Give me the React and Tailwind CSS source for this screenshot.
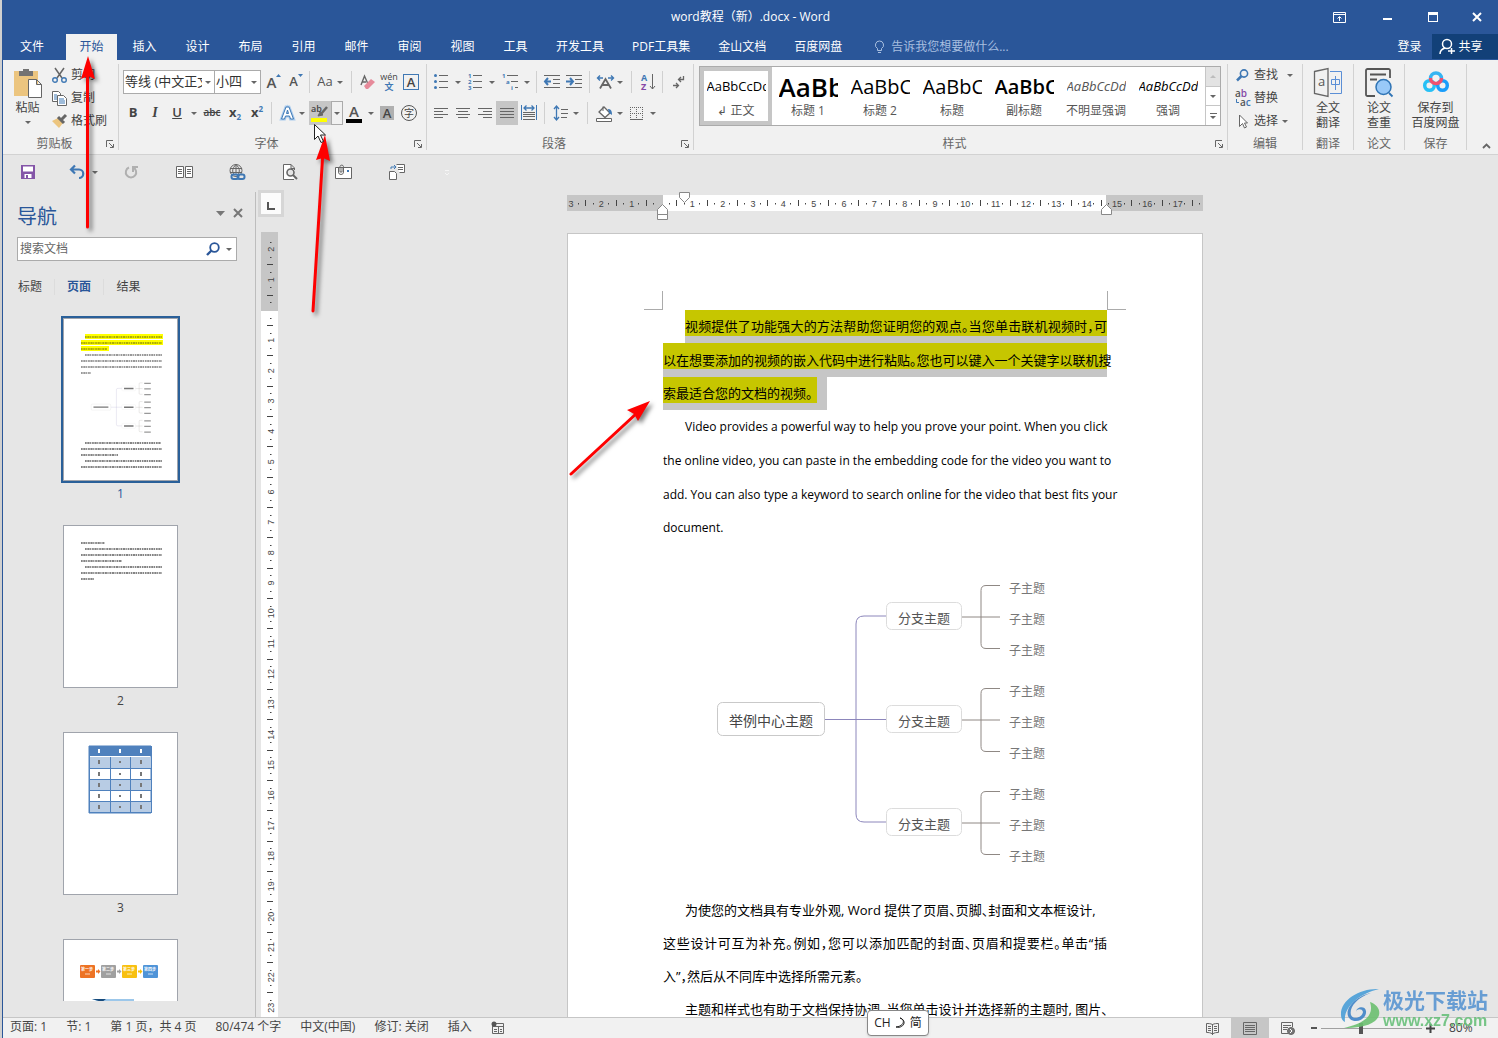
import React from 'react';
import clsx from 'clsx';

const G = '#666666';
const B = '#3f78b4';

const Svg = ({ w, h, children, className }) => (
  <svg width={w} height={h} viewBox={`0 0 ${w} ${h}`} fill="none" stroke={G} className={clsx('shrink-0 overflow-visible', className)} aria-hidden="true">
    {children}
  </svg>
);

const Caret = ({ className }) => (
  <span className={clsx('inline-block shrink-0 border-x-[3px] border-t-[3px] border-x-transparent border-t-[#666]', className)} />
);

const Tool = ({ label, className = 'w-[22px]', children }) => (
  <button type="button" aria-label={label} className={clsx('flex h-6 shrink-0 items-center justify-center', className)}>
    {children}
  </button>
);

const Drop = ({ label, className = 'w-3' }) => (
  <Tool label={`${label}选项`} className={className}>
    <Caret />
  </Tool>
);

const Sep = ({ className }) => <span className={clsx('h-[22px] w-px shrink-0 bg-[#d0d0d0]', className)} />;

const Launcher = () => (
  <button type="button" aria-label="更多设置" className="mr-1 shrink-0">
    <Svg w={8} h={8}>
      <path d="M.5 7V.5H7M3 3l4 4M7.500 4v3.500H4" />
    </Svg>
  </button>
);

const Group = ({ label, launcher, className, children }) => (
  <section className={clsx('flex shrink-0 flex-col border-r border-[#d2d2d2]', className)}>
    <div className="flex-1">{children}</div>
    <div className="flex h-3 items-center">
      <span className="flex-1 text-center leading-3 text-[#666]">{label}</span>
      {launcher && <Launcher />}
    </div>
  </section>
);

/* ---------- title bar and tabs ---------- */

const tabs = ['插入', '设计', '布局', '引用', '邮件', '审阅', '视图', '工具'];
const wideTabs = ['开发工具', 'PDF工具集', '金山文档', '百度网盘'];

const TitleBar = () => (
  <header className="bg-[#2a5699] text-white">
    <div className="flex h-[34px] items-center">
      <div className="w-[184px]" />
      <h1 className="flex-1 text-center text-xs">word教程（新）.docx - Word</h1>
      <div className="flex">
        <button type="button" aria-label="功能区显示选项" className="flex w-[50px] justify-center">
          <Svg w={13} h={11}>
            <path d="M.5.5h12v10H.5zM0 2.500h13" stroke="#fff" />
            <path d="M6.500 9V5M4.500 6.500l2-2 2 2" stroke="#fff" />
          </Svg>
        </button>
        <button type="button" aria-label="最小化" className="flex w-[46px] items-center justify-center">
          <span className="mt-1 h-[2px] w-[9px] bg-white" />
        </button>
        <button type="button" aria-label="最大化" className="flex w-[46px] items-center justify-center">
          <span className="h-[10px] w-[10px] border border-t-[3px] border-white" />
        </button>
        <button type="button" aria-label="关闭" className="flex w-[42px] items-center justify-center">
          <Svg w={10} h={10}>
            <path d="M1 1l8 8M9 1L1 9" stroke="#fff" strokeWidth="2" />
          </Svg>
        </button>
      </div>
    </div>
    <nav className="flex h-[26px] items-stretch pb-px text-xs">
      <button type="button" className="w-[58px]">文件</button>
      <button type="button" className="-mb-px mr-px ml-[5px] w-[51px] bg-[#f1f1f1] text-[#2a5699]">开始</button>
      {tabs.map((t) => (
        <button type="button" key={t} className="w-[53px]">{t}</button>
      ))}
      {wideTabs.map((t) => (
        <button type="button" key={t} className="px-[14px] whitespace-nowrap">{t}</button>
      ))}
      <label className="ml-[18px] flex flex-1 items-center gap-[6px] text-[#a8bfe0]">
        <Svg w={11} h={14}>
          <path d="M5.500 1a4 4 0 0 0-2 7.500V10.500h4V8.500a4 4 0 0 0-2-7.500zM4 12.500h3" stroke="#a8bfe0" />
        </Svg>
        <input type="text" placeholder="告诉我您想要做什么..." className="w-full outline-none placeholder:text-[#a8bfe0]" />
      </label>
      <button type="button" className="w-[45px]">登录</button>
      <button type="button" className="flex w-[66px] items-center justify-center gap-[3px] bg-[#124078] pr-2">
        <Svg w={16} h={17}>
          <circle cx="8" cy="6" r="4.500" stroke="#fff" strokeWidth="1.500" />
          <path d="M1 16c0-3 2-5 5-6M9 13h7M12.500 10v6" stroke="#fff" strokeWidth="1.500" />
        </Svg>
        共享
      </button>
    </nav>
  </header>
);

/* ---------- ribbon ---------- */

const Clipboard = () => (
  <Group label="剪贴板" launcher className="w-[116px]">
    <div className="flex">
      <button type="button" className="flex w-[49px] flex-col items-center pt-1">
        <Svg w={28} h={30}>
          <rect x="0" y="3" width="24" height="25" fill="#ecc57f" stroke="none" />
          <path d="M5 3h4V1h6v2h4v5H5z" fill="#737373" stroke="none" />
          <path d="M14.500 11.500h8l5 5v13h-13zM22.500 11.500v5h5" fill="#fff" />
        </Svg>
        <span className="leading-5">粘贴</span>
        <Caret className="mt-[3px]" />
      </button>
      <div className="flex flex-col gap-px">
        <button type="button" className="flex h-[22px] items-center gap-1">
          <Svg w={15} h={15}>
            <path d="M3 0l7 10M12 0L5 10" strokeWidth="1.500" />
            <circle cx="3" cy="12" r="2.300" stroke={B} strokeWidth="1.400" />
            <circle cx="12" cy="12" r="2.300" stroke={B} strokeWidth="1.400" />
          </Svg>
          剪切
        </button>
        <button type="button" className="flex h-[22px] items-center gap-1">
          <Svg w={15} h={15}>
            <path d="M.5.5h6l2 2v8h-8z" fill="#fff" />
            <path d="M2 4h3M2 6h3M2 8h3" stroke={B} />
            <path d="M5.500 4.500h6l3 3v7h-9z" fill="#fff" />
            <path d="M7 8h5M7 10h6M7 12h6" stroke={B} />
          </Svg>
          复制
        </button>
        <button type="button" className="flex h-[22px] items-center gap-1">
          <Svg w={15} h={14}>
            <path d="M0 7l6-3 5 5-4 5z" fill="#ecc57f" stroke="none" />
            <path d="M6 3l6 6M9 6l5-5" strokeWidth="3" />
          </Svg>
          格式刷
        </button>
      </div>
    </div>
  </Group>
);

const Combo = ({ label, value, className }) => (
  <label className={clsx('relative flex h-6 items-center border border-[#ababab] bg-white', className)}>
    <select aria-label={label} className="h-full w-full appearance-none overflow-hidden pr-3 pl-px text-[13px] whitespace-nowrap text-[#333] outline-none">
      <option>{value}</option>
    </select>
    <Caret className="absolute right-[3px]" />
  </label>
);

const FontGroup = () => (
  <Group label="字体" launcher className="w-[308px]">
    <div className="flex flex-col gap-[7px] pt-[6px] pl-[3px]">
      <div className="flex items-center">
        <Combo label="字体" value="等线 (中文正文)" className="ml-px w-[92px]" />
        <Combo label="字号" value="小四" className="-ml-px w-[47px]" />
        <Tool label="增大字号" className="ml-[2px] w-[22px]">
          <span className="text-[15px] font-semibold text-[#555]">A</span>
          <Svg w={5} h={4} className="-mt-3"><path d="M0 3l2.500-3L5 3z" fill={B} stroke="none" /></Svg>
        </Tool>
        <Tool label="减小字号" className="w-[22px]">
          <span className="text-[13px] font-semibold text-[#555]">A</span>
          <Svg w={5} h={4} className="-mt-3"><path d="M0 0l2.500 3L5 0z" fill={B} stroke="none" /></Svg>
        </Tool>
        <Sep className="ml-[2px]" />
        <Tool label="更改大小写" className="ml-1 w-[22px]"><span className="text-[13px] text-[#555]">Aa</span></Tool>
        <Drop label="更改大小写" className="w-[7px]" />
        <Sep className="ml-2" />
        <Tool label="清除格式" className="ml-1 w-[22px]">
          <Svg w={15} h={15}>
            <path d="M1 10L4.500 1 8 9M2 7h4" strokeWidth="1.400" />
            <path d="M4 11l7-7 4 3-7 7H6z" fill="#e68a9a" stroke="none" />
          </Svg>
        </Tool>
        <Tool label="拼音指南" className="w-[22px] flex-col">
          <span className="text-[9px] leading-[10px] text-[#444]">wén</span>
          <span className="text-[9px] leading-[10px] font-bold text-[#3f78b4]">文</span>
        </Tool>
        <Tool label="字符边框">
          <span className="h-4 w-4 border border-[#3f78b4] text-center text-[13px] leading-[14px] font-semibold text-[#444]">A</span>
        </Tool>
      </div>
      <div className="flex items-center text-[13px] text-[#444]">
        <Tool label="加粗"><b>B</b></Tool>
        <Tool label="倾斜"><i className="font-['Liberation_Serif'] text-sm font-bold">I</i></Tool>
        <Tool label="下划线"><span className="font-semibold underline">U</span></Tool>
        <Drop label="下划线" />
        <Tool label="删除线" className="w-6"><span className="text-[10px] font-semibold line-through">abc</span></Tool>
        <Tool label="下标" className="w-[22px]">
          <b>x</b><span className="mt-2 text-[8px] font-bold text-[#3f78b4]">2</span>
        </Tool>
        <Tool label="上标" className="w-[22px]">
          <b>x</b><span className="mb-2 text-[8px] font-bold text-[#3f78b4]">2</span>
        </Tool>
        <Sep className="ml-[3px]" />
        <Tool label="文本效果" className="ml-[5px] w-[20px]">
          <Svg w={15} h={16}>
            <path d="M1.500 14L6 2h3l4.500 12h-3l-1-3h-4l-1 3zM6 8.500h3L7.500 4z" stroke="#a9cbee" strokeWidth="3" />
            <path d="M1.500 14L6 2h3l4.500 12h-3l-1-3h-4l-1 3zM6.500 8.500h2L7.500 5z" fill="#fff" stroke={B} />
          </Svg>
        </Tool>
        <Drop label="文本效果" className="w-[9px]" />
        <Tool label="突出显示颜色" className="ml-[3px] w-[22px] bg-[#c6c6c6]">
          <Svg w={18} h={18}>
            <text x="0" y="8" fontSize="9" fontWeight="600" fill="#444" stroke="none">ab</text>
            <path d="M16 3l-6 7" strokeWidth="2.500" />
            <path d="M9 8l3 3-5 1z" fill={G} />
            <path d="M0 14h16v4H0z" fill="#ff0" stroke="none" />
          </Svg>
        </Tool>
        <Drop label="突出显示" className="w-3 border border-[#ababab]" />
        <Tool label="字体颜色" className="w-[22px] flex-col">
          <span className="text-[15px] leading-[15px] font-semibold text-[#555]">A</span>
          <span className="h-1 w-4 bg-black" />
        </Tool>
        <Drop label="字体颜色" className="w-[11px]" />
        <Tool label="字符底纹"><span className="h-[14px] w-[14px] bg-[#b0b0b0] text-center leading-[14px] font-semibold">A</span></Tool>
        <Tool label="带圈字符">
          <span className="h-4 w-4 rounded-full border border-[#555] text-center text-[10px] leading-[14px]">字</span>
        </Tool>
      </div>
    </div>
  </Group>
);

const Lines = ({ d }) => (
  <Svg w={14} h={13}><path d={d} /></Svg>
);

const ListIcon = ({ marks }) => (
  <Svg w={14} h={16}>
    {marks.map((m, i) =>
      m === '•' ? (
        <circle key={i} cx="1.500" cy={1.5 + i * 6} r="1.500" fill={B} stroke="none" />
      ) : (
        <text key={i} x="0" y={4 + i * 6} fontSize="6" fontWeight="700" fill={B} stroke="none">{m}</text>
      )
    )}
    <path d="M5 1.500h9M5 7.500h9M5 13.500h9" />
  </Svg>
);

const Paragraph = () => (
  <Group label="段落" launcher className="w-[267px]">
    <div className="flex flex-col gap-[7px] pt-[6px] pl-[3px]">
      <div className="flex items-center">
        <Tool label="项目符号"><ListIcon marks={['•', '•', '•']} /></Tool>
        <Drop label="项目符号" />
        <Tool label="编号"><ListIcon marks={['1', '2', '3']} /></Tool>
        <Drop label="编号" />
        <Tool label="多级列表" className="w-6">
          <Svg w={17} h={16}>
            <g fontSize="6" fontWeight="700" fill={B} stroke="none">
              <text x="0" y="4">1</text><text x="4" y="10">a</text><text x="9" y="16">i</text>
            </g>
            <path d="M5 1.500h11M9 7.500h7M13 13.500h3" />
          </Svg>
        </Tool>
        <Drop label="多级列表" className="w-[10px]" />
        <Sep className="ml-1" />
        <Tool label="减少缩进" className="ml-1 w-[22px]">
          <Svg w={16} h={14}>
            <path d="M0 .5h16M9 4.500h7M9 8.500h7M0 12.500h16" />
            <path d="M7 6.500H1M4 3L1 6.500 4 10" stroke={B} strokeWidth="2" />
          </Svg>
        </Tool>
        <Tool label="增加缩进">
          <Svg w={16} h={14}>
            <path d="M0 .5h16M9 4.500h7M9 8.500h7M0 12.500h16" />
            <path d="M0 6.500h6M4 3l3 3.500L4 10" stroke={B} strokeWidth="2" />
          </Svg>
        </Tool>
        <Sep className="ml-1" />
        <Tool label="中文版式" className="ml-1 w-[22px]">
          <Svg w={17} h={14}>
            <path d="M3 13.500L8.500 4 14 13.500M5.500 10h6" strokeWidth="1.800" />
            <path d="M6 3H1M3 .5L.5 3 3 5.500M11 3h5M14 .5L16.500 3 14 5.500" stroke={B} strokeWidth="1.400" />
          </Svg>
        </Tool>
        <Drop label="中文版式" className="w-2" />
        <Sep className="ml-[7px]" />
        <Tool label="排序" className="ml-1 w-[24px]">
          <Svg w={15} h={18}>
            <text x="0" y="8" fontSize="9" fontWeight="700" fill={B} stroke="none">A</text>
            <text x="0" y="17" fontSize="9" fontWeight="700" fill="#8548a5" stroke="none">Z</text>
            <path d="M11.500 1v15M9 13l2.500 3 2.500-3" />
          </Svg>
        </Tool>
        <Sep className="ml-[2px]" />
        <Tool label="显示编辑标记" className="ml-[5px] w-[22px]">
          <Svg w={12} h={13}>
            <path d="M10.500 0v3.500H6M8 1L5.500 3.500 8 6M0 9.500h5M3 7l2.500 2.500L3 12" strokeWidth="1.300" />
          </Svg>
        </Tool>
      </div>
      <div className="flex items-center">
        <Tool label="左对齐"><Lines d="M0 1.500h14M0 4.500h9M0 7.500h14M0 10.500h9" /></Tool>
        <Tool label="居中"><Lines d="M0 1.500h14M2 4.500h10M0 7.500h14M2 10.500h10" /></Tool>
        <Tool label="右对齐"><Lines d="M0 1.500h14M5 4.500h9M0 7.500h14M5 10.500h9" /></Tool>
        <Tool label="两端对齐" className="w-[22px] bg-[#c6c6c6]"><Lines d="M0 1.500h14M0 4.500h14M0 7.500h14M0 10.500h14" /></Tool>
        <Tool label="分散对齐">
          <Svg w={16} h={16}>
            <path d="M.5 0v15M15.500 0v15" stroke={B} />
            <path d="M3 3h10M5.500.5L3 3l2.500 2.500M10.500.5L13 3l-2.500 2.500" stroke={B} strokeWidth="1.300" />
            <path d="M2 7.500h12M2 9.500h12M2 11.500h12M2 14.500h12" />
          </Svg>
        </Tool>
        <Sep className="ml-1" />
        <Tool label="行距" className="ml-1 w-[24px]">
          <Svg w={14} h={16}>
            <path d="M2.500 1v14M0 4l2.500-3L5 4M0 12l2.500 3L5 12" stroke={B} strokeWidth="1.300" />
            <path d="M7 4.500h7M7 8.500h7M7 12.500h6" />
          </Svg>
        </Tool>
        <Drop label="行距" className="w-[6px]" />
        <Sep className="ml-2" />
        <Tool label="底纹" className="ml-1 w-[24px]">
          <Svg w={17} h={17}>
            <path d="M3 7l5-5 6 6-5 4.500z" fill="#fff" strokeWidth="1.300" />
            <path d="M7 6V1.500" />
            <path d="M12 4c3 0 4 2 4 6l-3-2z" fill={B} stroke="none" />
            <path d="M.5 13.500h15v3H.5z" fill="#fff" />
          </Svg>
        </Tool>
        <Drop label="底纹" className="w-2" />
        <Tool label="边框" className="ml-px w-[22px]">
          <Svg w={13} h={13}>
            <path d="M0 .5h13M0 6.500h13M.5 0v12M6.500 0v12M12.500 0v12" strokeDasharray="1 1" />
            <path d="M0 12.500h13" />
          </Svg>
        </Tool>
        <Drop label="边框" />
      </div>
    </div>
  </Group>
);

const styles = [
  { name: '正文', sample: 'AaBbCcDd', cls: 'text-[13px] text-black', active: true },
  { name: '标题 1', sample: 'AaBb', cls: 'text-[26px] font-semibold text-black' },
  { name: '标题 2', sample: 'AaBbC', cls: 'text-xl text-black' },
  { name: '标题', sample: 'AaBbC', cls: 'text-xl text-black' },
  { name: '副标题', sample: 'AaBbC', cls: 'text-xl font-semibold text-black' },
  { name: '不明显强调', sample: 'AaBbCcDd', cls: 'text-[13px] italic text-[#555]' },
  { name: '强调', sample: 'AaBbCcDd', cls: 'text-[13px] italic text-black' },
];

const Styles = () => (
  <Group label="样式" launcher className="flex-1">
    <div className="mt-[2px] mr-[6px] ml-[5px] flex h-[60px] border border-[#ababab] bg-white">
      <div className="flex flex-1 overflow-hidden">
        {styles.map((s) => (
          <button
            type="button"
            key={s.name}
            className={clsx('flex w-[72px] shrink-0 flex-col items-center border-4', s.active ? 'border-[#c6c6c6]' : 'border-transparent')}
          >
            <span className={clsx('flex h-8 w-[59px] items-center overflow-hidden', s.cls)}>{s.sample}</span>
            <span className="leading-4 whitespace-nowrap text-[#555]">{s.active ? `↲ ${s.name}` : s.name}</span>
          </button>
        ))}
      </div>
      <div className="flex w-[15px] flex-col border-l border-[#c6c6c6]">
        <button type="button" aria-label="上一行" className="flex flex-1 items-center justify-center bg-[#e3e3e3]">
          <Caret className="rotate-180 opacity-30" />
        </button>
        <button type="button" aria-label="下一行" className="flex flex-1 items-center justify-center border-y border-[#c6c6c6]"><Caret /></button>
        <button type="button" aria-label="其他样式" className="flex flex-1 flex-col items-center justify-center gap-[2px]">
          <span className="h-px w-[7px] bg-[#666]" />
          <Caret />
        </button>
      </div>
    </div>
  </Group>
);

const Editing = () => (
  <Group label="编辑" className="w-[75px]">
    <div className="flex flex-col gap-px pl-[7px]">
      <button type="button" className="flex h-[22px] items-center">
        <Svg w={15} h={13}>
          <circle cx="9" cy="4.500" r="3.600" stroke={B} strokeWidth="1.600" />
          <path d="M6.500 7L2 11.500" stroke={B} strokeWidth="2.500" />
        </Svg>
        <span className="ml-1">查找</span>
        <Caret className="ml-[9px]" />
      </button>
      <button type="button" className="flex h-[22px] items-center">
        <Svg w={17} h={17}>
          <g fontSize="10" fontWeight="600" stroke="none">
            <text x="0" y="7" fill="#555">a<tspan fill="#8548a5">b</tspan></text>
            <text x="5" y="16" fill="#555">a<tspan fill={B}>c</tspan></text>
          </g>
          <path d="M1.500 9v3.500H4" stroke={B} />
        </Svg>
        <span className="ml-[2px]">替换</span>
      </button>
      <button type="button" className="flex h-[22px] items-center">
        <Svg w={15} h={15}>
          <path d="M4.500 1v11.500L7.500 9.500l2 4.500 2-1-2-4h3z" fill="#fff" />
        </Svg>
        <span className="ml-1">选择</span>
        <Caret className="ml-1" />
      </button>
    </div>
  </Group>
);

const BigButton = ({ icon, lines }) => (
  <button type="button" className="flex w-full flex-col items-center pt-1 leading-[15px]">
    {icon}
    <span className="mt-[3px]">{lines[0]}</span>
    <span>{lines[1]}</span>
  </button>
);

const AddIns = () => (
  <>
    <Group label="翻译" className="w-[51px]">
      <BigButton
        lines={['全文', '翻译']}
        icon={
          <Svg w={28} h={29}>
            <path d="M.5 3.500L14 .5v28L.5 25.500z" strokeWidth="1.300" />
            <text x="4" y="18" fontSize="13" fill="#555" stroke="none">a</text>
            <path d="M16 3.500h11.500v22H16M21.500 8v14M17.500 11.500h8v5h-8z" stroke="#5b8fd6" />
          </Svg>
        }
      />
    </Group>
    <Group label="论文" className="w-[51px]">
      <BigButton
        lines={['论文', '查重']}
        icon={
          <Svg w={28} h={29}>
            <path d="M10 28H2.500A1.500 1.500 0 0 1 1 26.500v-24A1.500 1.500 0 0 1 2.500 1h21A1.500 1.500 0 0 1 25 2.500V10M5 6.500h16M5 11.500h7" stroke="#555" strokeWidth="1.800" />
            <circle cx="18.500" cy="19" r="7.500" fill="#99c9f8" stroke="#2f74b5" strokeWidth="1.500" />
            <path d="M24 25l3.500 3.500" stroke="#2f74b5" strokeWidth="1.800" />
          </Svg>
        }
      />
    </Group>
    <Group label="保存" className="w-[62px]">
      <BigButton
        lines={['保存到', '百度网盘']}
        icon={
          <Svg w={28} h={29}>
            <circle cx="7.500" cy="17.500" r="4.800" stroke="#27c0f5" strokeWidth="3.500" />
            <circle cx="20.500" cy="17.500" r="4.800" stroke="#1a9dfa" strokeWidth="3.500" />
            <path d="M8.500 10.500a5.500 5.500 0 0 1 11 0" stroke="#35b4f2" strokeWidth="3.500" />
            <path d="M8.500 10a5.500 5.500 0 0 0 11 0" stroke="#f0506e" strokeWidth="3.500" />
          </Svg>
        }
      />
    </Group>
  </>
);

const Ribbon = () => (
  <div className="flex h-[95px] border-b border-[#d2d2d2] bg-[#f1f1f1] pt-1 pb-[4px] text-xs text-[#444]">
    <Clipboard />
    <FontGroup />
    <Paragraph />
    <Styles />
    <Editing />
    <AddIns />
    <button type="button" aria-label="折叠功能区" className="flex w-[31px] items-end justify-center pb-px pl-2">
      <Svg w={9} h={6}><path d="M1 5l3.500-3.500L8 5" strokeWidth="1.800" /></Svg>
    </button>
  </div>
);

/* ---------- quick access bar ---------- */

const QuickButton = ({ label, children, className = 'w-[53px]' }) => (
  <button type="button" aria-label={label} className={clsx('flex h-full shrink-0 items-center justify-center', className)}>{children}</button>
);

const QuickAccess = () => (
  <div className="flex h-[35px] items-center pb-px">
    <QuickButton label="保存" className="w-[50px]">
      <Svg w={14} h={14}>
        <path d="M0 0h14v14H0z" fill="#8455a8" stroke="none" />
        <path d="M2 1.500h10v5H2zM3.500 9h7v4h-7z" fill="#fff" stroke="none" />
        <path d="M5 10h2v3H5z" fill="#8455a8" stroke="none" />
      </Svg>
    </QuickButton>
    <QuickButton label="撤消" className="w-[52px] pl-[10px]">
      <Svg w={15} h={14}>
        <path d="M1 4.500h8a4.200 4.200 0 0 1 0 8.500M5 .5L1 4.500l4 4" stroke={B} strokeWidth="2.200" />
      </Svg>
      <Caret className="ml-[7px]" />
    </QuickButton>
    <QuickButton label="恢复">
      <Svg w={14} h={14}>
        <path d="M8 2.500A5.200 5.200 0 1 1 4 2.500M8 7V2h5" stroke="#b0b0b0" strokeWidth="2" />
      </Svg>
    </QuickButton>
    <QuickButton label="阅读">
      <Svg w={17} h={12}>
        <path d="M.5.5h7v11h-7zM9.500.5h7v11h-7z" fill="#fff" />
        <path d="M2 3.500h4M2 5.500h4M2 7.500h4M11 3.500h4M11 5.500h4M11 7.500h4" />
      </Svg>
    </QuickButton>
    <QuickButton label="超链接">
      <Svg w={17} h={17}>
        <circle cx="7" cy="6.500" r="6" />
        <path d="M1 4.500h12M1 8.500h12M7 .5v9M7 .5c-4 4-4 7-2 10M7 .5c4 4 4 7 2 10" />
        <rect x="2.500" y="10.500" width="7" height="4.500" rx="2" stroke={B} strokeWidth="2" />
        <rect x="8.500" y="10.500" width="7" height="4.500" rx="2" stroke={B} strokeWidth="2" />
      </Svg>
    </QuickButton>
    <QuickButton label="打印预览">
      <Svg w={15} h={16}>
        <path d="M11 15.500H.5V.5H8l3.500 3.500v2M8 .5v4h3.500" fill="#fff" />
        <circle cx="7.500" cy="8.500" r="3.500" fill="#e6e6e6" strokeWidth="1.600" />
        <path d="M10 11l4 4" strokeWidth="2" />
      </Svg>
    </QuickButton>
    <QuickButton label="附件">
      <Svg w={17} h={16}>
        <path d="M.5 3.500h16v11H.5z" fill="#fff" />
        <path d="M3.500 3v5a2.500 2.500 0 0 0 5 0V2.500a1.800 1.800 0 0 0-3.500 0V8h2V4" />
        <path d="M12 6h2v2h-2z" fill={B} stroke="none" />
      </Svg>
    </QuickButton>
    <QuickButton label="合并">
      <Svg w={16} h={16}>
        <path d="M.5 7.500h5l2 2v6h-7zM7.500.5h8v8h-5" fill="#fff" />
        <path d="M9 3.500h5M9 5.500h5" />
        <path d="M2 5V3h5M5 1l2 2-2 2" stroke={B} />
      </Svg>
    </QuickButton>
    <QuickButton label="自定义" className="w-12">
      <Svg w={6} h={7}><path d="M1 1.500h4M1 4l2 2 2-2" stroke="#f6f6f6" /></Svg>
    </QuickButton>
  </div>
);

/* ---------- mind map ---------- */

const MindMap = ({ mini }) => (
  <g fill="none" fontFamily="'Noto Sans CJK SC', sans-serif">
    <path d="M125 149.500h61M156 149.500V54q0-8 8-8h22M156 149.500V244q0 8 8 8h22" stroke="#8c86bb" />
    <rect x="17.500" y="132.500" width="107" height="33" rx="5" fill="#fff" stroke="#c9c9c9" />
    {!mini && <text x="71" y="156" fontSize="14" textAnchor="middle" fill="#444">举例中心主题</text>}
    {[0, 103, 206].map((y) => (
      <g key={y} transform={`translate(0 ${y})`}>
        <rect x="186.500" y="32.500" width="75" height="27" rx="5" fill="#fff" stroke="#dcdcdc" />
        <path d="M262 47h38M300 15.500h-14q-5 0-5 5V73.500q0 5 5 5h14" stroke="#8f8884" />
        {!mini && <text x="224" y="53" fontSize="13" textAnchor="middle" fill="#555">分支主题</text>}
        {!mini && [23, 54, 85].map((t) => <text key={t} x="309" y={t} fontSize="12" fill="#777">子主题</text>)}
      </g>
    ))}
    {mini && <path d="M30 149h82M198 47h52M198 150h52M198 253h52" stroke="#777" strokeWidth="8" />}
    {mini && [0, 103, 206].map((y) => <path key={y} d={`M309 ${y + 18}h36M309 ${y + 49}h36M309 ${y + 80}h36`} stroke="#999" strokeWidth="7" />)}
  </g>
);

/* ---------- navigation pane ---------- */

// x1, x2, y of every printed line, in thumbnail pixels
const TinyText = ({ rows, color = '#333' }) =>
  rows.map(([x1, x2, y]) => (
    <path key={y} d={`M${x1} ${y}H${x2}`} stroke={color} strokeWidth="1.500" strokeDasharray="1.700 .6 2.300 .5 1.200 .8" opacity=".8" />
  ));

const ThumbOne = () => (
  <>
    <path d="M21 15h78v5H21zM17 21h82v5H17zM17 27h28v5H17z" fill="#ff0" stroke="none" />
    <TinyText rows={[[21, 98, 18], [17, 98, 24], [17, 43, 30]]} color="#77770a" />
    <TinyText rows={[[21, 98, 36], [17, 98, 42], [17, 98, 48], [17, 27, 54]]} color="#555" />
    <g transform="translate(24 61) scale(.182)"><MindMap mini /></g>
    <TinyText rows={[[21, 97, 124], [17, 98, 130], [17, 54, 136], [21, 98, 142], [17, 98, 148]]} />
  </>
);

const ThumbTwo = () => (
  <TinyText rows={[[17, 41, 17], [21, 98, 23], [17, 98, 29], [17, 58, 35], [21, 98, 41], [17, 98, 47], [17, 30, 53]]} />
);

const ThumbThree = () => (
  <g transform="translate(-1 -1)">
    <path d="M26 14h62v67H26z" fill="#fff" stroke="#4f81bd" />
    <path d="M26 14h62v10H26z" fill="#4f81bd" stroke="none" />
    <path d="M26 25h62v11H26zM26 48h62v11H26zM26 70h62v11H26z" fill="#b8cce4" stroke="none" />
    <path d="M26 36.500h62M26 47.500h62M26 58.500h62M26 69.500h62M26 80.500h62M26.500 14v67M47.500 25v56M67.500 25v56M88.500 14v67" stroke="#4f81bd" />
    <path d="M35 19h2M56 19h2M77 19h2" stroke="#fff" strokeWidth="4" />
    <path d="M36 28v4M57 29v2M78 28v4M36 40v4M57 41v2M78 40v4M36 51v4M57 52v2M78 51v4M36 62v4M57 63v2M78 62v4M36 73v4M57 74v2M78 73v4" stroke="#777" strokeWidth="2" />
  </g>
);

const steps = [
  ['第一步', '#ed7325'],
  ['第二步', '#a0a0a0'],
  ['第三步', '#f8c010'],
  ['第四步', '#4f94d8'],
];

const ThumbFour = () => (
  <>
    {steps.map(([name, color], i) => (
      <g key={name} transform={`translate(${16 + i * 21} 25)`} stroke="none">
        <rect width="15" height="13" rx="1" fill={color} />
        <text x="7" y="6" fontSize="4" fontWeight="700" textAnchor="middle" fill="#fff">{name}</text>
        <path d="M5 9h5" stroke="#fff" opacity=".7" />
        {i < 3 && <path d="M16 5.500h2V4l2.500 2.500L18 9V7.500h-2z" fill={color} />}
      </g>
    ))}
    <path d="M28 59h42v4H38z" fill="#9cc7ea" stroke="none" />
    <path d="M28 59h14l-4 3z" fill="#164a7c" stroke="none" />
  </>
);

const thumbs = [ThumbOne, ThumbTwo, ThumbThree, ThumbFour];

const NavPane = () => (
  <aside className="mt-[2px] flex w-[253px] shrink-0 flex-col border-r border-[#bdbdbd] pb-4 text-xs text-[#444]">
    <div className="mt-3 flex h-[26px] items-start pr-3 pl-[14px]">
      <h2 className="flex-1 text-xl leading-[26px] text-[#2a5699]">导航</h2>
      <button type="button" aria-label="窗格选项" className="flex h-[18px] items-center">
        <Svg w={9} h={5}><path d="M0 0h9L4.500 5z" fill="#777" stroke="none" /></Svg>
      </button>
      <button type="button" aria-label="关闭窗格" className="ml-2 flex h-[18px] items-center">
        <Svg w={10} h={10}><path d="M1 1l8 8M9 1L1 9" stroke="#777" strokeWidth="2" /></Svg>
      </button>
    </div>
    <div className="mt-[7px] ml-[14px] flex h-6 w-[220px] items-center border border-[#ababab] bg-white pr-1">
      <input type="text" aria-label="搜索文档" placeholder="搜索文档" className="min-w-0 flex-1 pl-[2px] outline-none placeholder:text-[#666]" />
      <button type="button" aria-label="搜索">
        <Svg w={14} h={14}>
          <circle cx="8.500" cy="5.500" r="4.300" stroke="#2a5699" strokeWidth="1.800" />
          <path d="M5.500 8.500L1 13" stroke="#2a5699" strokeWidth="2.400" />
        </Svg>
      </button>
      <Caret className="ml-[6px]" />
    </div>
    <div className="mt-4 flex h-5 items-center pl-[3px]">
      <button type="button" className="w-[49px] border-r border-[#dcdcdc]">标题</button>
      <button type="button" className="w-[49px] border-r border-[#dcdcdc] font-bold text-[#2a5699]">页面</button>
      <button type="button" className="w-[49px]">结果</button>
    </div>
    <div className="mt-[13px] flex min-h-0 w-[235px] flex-1 flex-col items-center gap-[19px] overflow-hidden pt-2">
      {thumbs.map((Thumb, i) => (
        <button type="button" key={i} className={clsx('flex shrink-0 flex-col items-center', i === 0 && 'text-[#2a5699]')}>
          <span className={clsx('block border border-[#a0a4ac] bg-white', i === 0 && 'outline-2 outline-[#2a6099]')}>
            <Svg w={113} h={161}><Thumb /></Svg>
          </span>
          <span className="h-[25px] leading-[25px]">{i + 1}</span>
        </button>
      ))}
    </div>
  </aside>
);

/* ---------- rulers ---------- */

const QUARTER = 91 / 12;

const marks = (zero, from, to) => {
  const list = [];
  for (let k = from; k <= to; k++) {
    if (k !== 0) list.push({ k, pos: zero + k * QUARTER });
  }
  return list;
};

const Tick = ({ k, pos }) => {
  if (k % 4 === 0) {
    return <text x={pos} y="11.500" fontSize="9" textAnchor="middle" fill="#444" stroke="none">{Math.abs(k / 4)}</text>;
  }
  const x = Math.round(pos) - 0.5;
  return k % 2 === 0 ? <path d={`M${x} 5v6`} stroke="#444" /> : <path d={`M${x} 8v1.500`} stroke="#444" />;
};

const HRuler = () => (
  <Svg w={636} h={28} className="mt-[2px] font-['Liberation_Sans']">
    <g transform="translate(0 3)">
      <path d="M0 0h636v16H0z" fill="#c6c6c6" stroke="none" />
      <path d="M96 0h443v16H96z" fill="#fff" stroke="none" />
      {marks(95, -12, 71).map((m) => <Tick key={m.k} {...m} />)}
    </g>
    <path d="M112.500.5h10v5l-5 5-5-5z" fill="#fff" stroke="#888" />
    <path d="M90.500 22.500v-5l5-5 5 5v5zM90.500 22.500h10v5h-10z" fill="#fff" stroke="#888" />
    <path d="M534.500 22.500v-5l5-5 5 5v5z" fill="#fff" stroke="#888" />
  </Svg>
);

const VRuler = () => (
  <div className="flex w-[26px] shrink-0 flex-col items-start overflow-hidden">
    <button type="button" aria-label="制表符" className="flex h-[27px] w-[26px] shrink-0 items-center justify-center border-[3px] border-[#d6d6d6] bg-[#fbfbfb]">
      <Svg w={8} h={8} className="mt-1"><path d="M1 0v7h7" stroke="#555" strokeWidth="2" /></Svg>
    </button>
    <Svg w={17} h={785} className="mt-[15px] ml-[3px] font-['Liberation_Sans']">
      <path d="M0 0h17v785H0z" fill="#fff" stroke="none" />
      <path d="M0 0h17v79H0z" fill="#c6c6c6" stroke="none" />
      <g transform="rotate(-90) translate(-785 1)">
        {marks(0, -9, 92).map(({ k, pos }) => <Tick key={k} k={k} pos={785 - 78 - pos} />)}
      </g>
    </Svg>
  </div>
);

/* ---------- page ---------- */

const Line = ({ indent, last, className, children }) => (
  <span className={clsx('block whitespace-nowrap', indent && 'ml-[22px]', !last && '[text-align-last:justify]', className)}>{children}</span>
);

const Marked = ({ indent, className, children }) => (
  <Line indent={indent} className={clsx('bg-[linear-gradient(#c6c600_26px,#c6c6c6_26px)]', className)}>{children}</Line>
);

const Page = () => (
  <main className="mt-[13px] w-[636px] shrink-0 border border-[#c6c6c6] bg-white">
    <div className="flex justify-between px-[76px] pt-[57px]">
      <span className="h-[19px] w-[19px] border-r border-b border-[#ababab]" />
      <span className="h-[19px] w-[19px] border-b border-l border-[#ababab]" />
    </div>
    <article className="mr-[95px] ml-[95px] font-['Open_Sans','Noto_Sans_CJK_SC',sans-serif] text-[13px] leading-[33px] text-black [font-feature-settings:'halt']">
      <p>
        <Marked indent>视频提供了功能强大的方法帮助您证明您的观点。当您单击联机视频时，可</Marked>
        <Marked className="leading-[34px]">以在想要添加的视频的嵌入代码中进行粘贴。您也可以键入一个关键字以联机搜</Marked>
        <span className="flex w-[164px] bg-[#c6c6c6]">
          <span className="w-[154px] bg-[linear-gradient(#c6c600_26px,#c6c6c6_26px)]">索最适合您的文档的视频。</span>
        </span>
      </p>
      <p className="text-xs leading-[34px]">
        <Line indent>Video provides a powerful way to help you prove your point. When you click</Line>
        <Line>the online video, you can paste in the embedding code for the video you want to</Line>
        <Line className="leading-[33px]">add. You can also type a keyword to search online for the video that best fits your</Line>
        <Line last className="leading-[33px]">document.</Line>
      </p>
      <svg width="360" height="300" viewBox="0 0 360 300" role="img" aria-label="思维导图" className="mt-[26px] mb-[23px] ml-[37px]">
        <MindMap />
      </svg>
      <p>
        <Line indent last className="leading-[34px]">为使您的文档具有专业外观, Word 提供了页眉、页脚、封面和文本框设计,</Line>
        <Line>这些设计可互为补充。例如，您可以添加匹配的封面、页眉和提要栏。单击“插</Line>
        <Line last>入”，然后从不同库中选择所需元素。</Line>
      </p>
      <p>
        <Line indent>主题和样式也有助于文档保持协调。当您单击设计并选择新的主题时, 图片、</Line>
      </p>
    </article>
  </main>
);

/* ---------- status bar ---------- */

const StatusBar = () => (
  <footer className="flex h-[21px] shrink-0 items-center border-t border-[#c6c6c6] bg-[#f1f1f1] pl-[7px] text-xs whitespace-nowrap text-[#444]">
    <div className="flex flex-1 items-center gap-[19px] pb-[2px]">
      <span>页面: 1</span>
      <span>节: 1</span>
      <span>第 1 页，共 4 页</span>
      <span>80/474 个字</span>
      <span>中文(中国)</span>
      <span>修订: 关闭</span>
      <span>插入</span>
      <Svg w={13} h={13}>
        <path d="M1.500 2.500h11v10h-11zM1 5.500h12M7.500 5v7M3 8.500h3M9 8.500h2M3 10.500h3M9 10.500h2" />
        <circle cx="3" cy="3" r="2.500" fill="#555" stroke="none" />
      </Svg>
    </div>
    <button type="button" aria-label="阅读视图" className="flex w-[38px] justify-center">
      <Svg w={13} h={13}>
        <path d="M6.500 2.500c-2-1-4-1-6-1v9c2 0 4 0 6 1.500 2-1.500 4-1.500 6-1.500v-9c-2 0-4 0-6 1zM6.500 2v11M2 4.500h3M2 6.500h3M2 8.500h3M8 4.500h3M8 6.500h3M8 8.500h3" />
      </Svg>
    </button>
    <button type="button" aria-label="页面视图" className="flex h-full w-[38px] items-center justify-center bg-[#c6c6c6]">
      <Svg w={14} h={13}><path d="M.5.5h13v12H.5zM2 3.500h10M2 5.500h10M2 7.500h10M2 9.500h10" /></Svg>
    </button>
    <button type="button" aria-label="Web 视图" className="flex w-[38px] justify-center">
      <Svg w={14} h={13}>
        <path d="M7 11.500H.5V.5h11V5M2 3.500h8M2 5.500h5M2 7.500h4" />
        <circle cx="10" cy="9" r="3.500" fill="#777" />
        <path d="M9 7l2 2-2 2" stroke="#fff" />
      </Svg>
    </button>
    <button type="button" aria-label="缩小" className="ml-1 h-[2px] w-[6px] bg-[#555]" />
    <input
      type="range"
      aria-label="显示比例"
      min="10"
      max="190"
      defaultValue="80"
      className="ml-1 h-[11px] w-[101px] appearance-none bg-[linear-gradient(#a0a0a0,#a0a0a0)] bg-[length:100%_1px] bg-center bg-no-repeat [&::-webkit-slider-thumb]:h-[11px] [&::-webkit-slider-thumb]:w-1 [&::-webkit-slider-thumb]:appearance-none [&::-webkit-slider-thumb]:bg-[#555]"
    />
    <button type="button" aria-label="放大" className="ml-1">
      <Svg w={9} h={9}><path d="M4.500 0v9M0 4.500h9" stroke="#444" strokeWidth="2" /></Svg>
    </button>
    <button type="button" className="w-[63px] pl-[14px] text-left">80%</button>
  </footer>
);

/* ---------- things drawn over the window ---------- */

const Arrows = () => (
  <svg width="700" height="500" className="pointer-events-none absolute top-0 left-0 drop-shadow-[3px_3px_2px_rgba(0,0,0,0.5)]" aria-hidden="true">
    <g stroke="#fe0000" strokeWidth="3" strokeLinecap="round" fill="#fe0000">
      <path d="M87.500 227V75M313 311l10-160M571 474l66-61" />
      <path d="M88 56l7 23-7-3-7 3zM325 135l5 26-7-3-7 2zM650 401l-12 20-4-7-7-4z" strokeWidth="0" />
    </g>
  </svg>
);

const Cursor = () => (
  <svg width="13" height="20" viewBox="0 0 13 20" className="pointer-events-none absolute top-[124px] left-[314px]" aria-hidden="true">
    <path d="M.5.5v15l3.500-3.500 3 6.500 2.500-1-3-6.500h5z" fill="#fff" stroke="#222" />
  </svg>
);

const ImeBar = () => (
  <div className="absolute bottom-[2px] left-1/2 ml-[118px] flex h-[26px] w-[62px] items-center justify-center gap-1 rounded border border-[#888] bg-white text-xs text-[#222] shadow">
    CH
    <Svg w={11} h={12}><path d="M5 1c5 1 5 8-4 9 7 2 12-6 4-9z" stroke="#222" /></Svg>
    简
  </div>
);

const Watermark = () => (
  <div className="pointer-events-none absolute right-[10px] bottom-2 flex items-end opacity-90">
    <svg width="46" height="44" viewBox="0 0 44 44" aria-hidden="true">
      <path d="M41 3C22 2 2 14 3 29c0 4 2 6 4 7C5 22 20 8 41 3z" fill="#4a9fd8" />
      <path d="M33 7C18 12 11 22 13 29c2 5 11 3 12-3-1-4-7-3-7 0 0-5 9-7 10-1 1 8-10 13-16 8C4 25 17 10 33 7z" fill="#3f84c8" />
      <path d="M32 16c9 3 13 12 5 19-8 6-20 7-31 7 11-3 32-8 26-26z" fill="#6cc070" />
    </svg>
    <div className="flex flex-col items-start whitespace-nowrap">
      <span className="text-[21px] leading-6 font-bold text-[#5a96d2]">极光下载站</span>
      <span className="font-['Liberation_Sans'] text-base leading-[18px] font-bold text-[#69c07b]">www.xz7.com</span>
    </div>
  </div>
);

const App = () => (
  <div className="relative flex h-screen overflow-hidden bg-[#e6e6e6] font-['Open_Sans','Noto_Sans_CJK_SC',sans-serif]">
    <div className="w-[3px] shrink-0 border-r border-[#2a5699] bg-[#d0d0d0]" />
    <div className="flex min-w-0 flex-1 flex-col">
      <TitleBar />
      <Ribbon />
      <QuickAccess />
      <div className="flex min-h-0 flex-1">
        <NavPane />
        <div className="ml-[2px] flex min-w-0 flex-1">
          <VRuler />
          <div className="flex min-w-0 flex-1 flex-col items-center overflow-hidden pr-3">
            <HRuler />
            <Page />
          </div>
        </div>
      </div>
      <StatusBar />
    </div>
    <Arrows />
    <Cursor />
    <ImeBar />
    <Watermark />
  </div>
);

export default App;
